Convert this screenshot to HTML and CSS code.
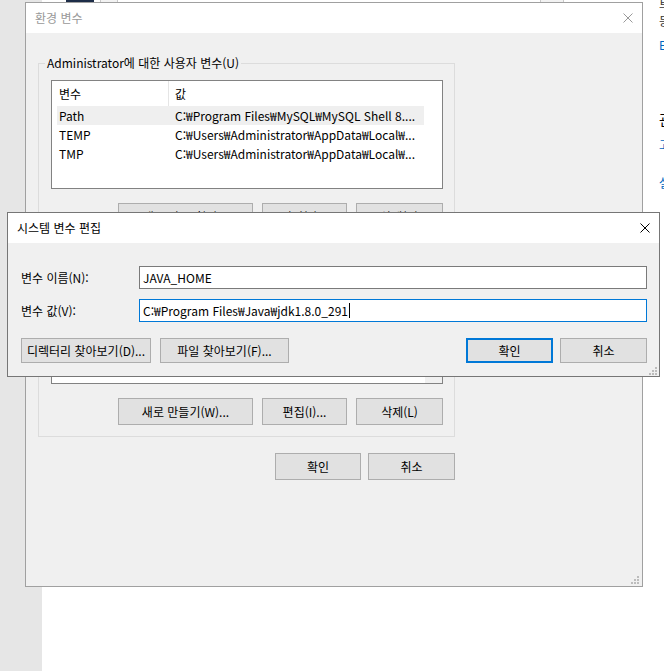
FILE: index.html
```html
<!DOCTYPE html>
<html lang="ko">
<head>
<meta charset="utf-8">
<title>환경 변수</title>
<link rel="stylesheet" href="styles.css">
</head>
<body>
<div class="desktop">
  <div class="bg-bar">
    <span class="bg-tab navy"></span>
    <span class="bg-tab grey"></span>
    <span class="bg-tab grey far"></span>
  </div>

  <div class="bg-page">
    <p class="bp-line t1">트랜잭션</p>
    <p class="bp-line t2">등록된 소유자</p>
    <p class="bp-line link t3">Edition</p>
    <p class="bp-line head t4">관련 설정</p>
    <p class="bp-line link t5">고급 시스템 설정</p>
    <p class="bp-line link t6">설정</p>
  </div>

  <section class="window env">
    <header class="titlebar inactive">
      <span class="title">환경 변수</span>
      <svg class="close" viewBox="0 0 10 10" width="10" height="10"><path d="M0.5 0.5 L9.5 9.5 M9.5 0.5 L0.5 9.5" /></svg>
    </header>
    <div class="env-body">
      <fieldset class="group">
        <legend>Administrator에 대한 사용자 변수(U)</legend>
        <div class="listview">
          <div class="lv-header">
            <span class="hcell c1">변수</span>
            <span class="hcell c2">값</span>
          </div>
          <div class="lv-row selected"><span class="cell c1">Path</span><span class="cell c2">C:₩Program Files₩MySQL₩MySQL Shell 8....</span></div>
          <div class="lv-row"><span class="cell c1">TEMP</span><span class="cell c2">C:₩Users₩Administrator₩AppData₩Local₩...</span></div>
          <div class="lv-row"><span class="cell c1">TMP</span><span class="cell c2">C:₩Users₩Administrator₩AppData₩Local₩...</span></div>
        </div>
        <div class="btn-row">
          <button class="btn w-new">새로 만들기(N)...</button>
          <button class="btn w-edit">편집(E)...</button>
          <button class="btn w-del">삭제(D)</button>
        </div>
      </fieldset>

      <fieldset class="group second">
        <legend>시스템 변수(S)</legend>
        <div class="listview scrolling">
          <div class="lv-main"></div>
          <div class="scrollbar"></div>
        </div>
        <div class="btn-row">
          <button class="btn w-new">새로 만들기(W)...</button>
          <button class="btn w-edit">편집(I)...</button>
          <button class="btn w-del">삭제(L)</button>
        </div>
      </fieldset>

      <div class="dlg-buttons">
        <button class="btn w-ok">확인</button>
        <button class="btn w-cancel">취소</button>
      </div>
    </div>
    <svg class="grip" viewBox="0 0 8 8" width="8" height="8"><rect x="6" y="0" width="2" height="2"/><rect x="3" y="3" width="2" height="2"/><rect x="6" y="3" width="2" height="2"/><rect x="0" y="6" width="2" height="2"/><rect x="3" y="6" width="2" height="2"/><rect x="6" y="6" width="2" height="2"/></svg>
  </section>

  <section class="window edit">
    <header class="titlebar">
      <span class="title">시스템 변수 편집</span>
      <svg class="close" viewBox="0 0 10 10" width="10" height="10"><path d="M0.5 0.5 L9.5 9.5 M9.5 0.5 L0.5 9.5" /></svg>
    </header>
    <div class="edit-body">
      <div class="form-grid">
        <label class="field-label" for="vname">변수 이름(N):</label>
        <div class="textbox" id="vname">JAVA_HOME</div>
        <label class="field-label" for="vvalue">변수 값(V):</label>
        <div class="textbox focused" id="vvalue">C:₩Program Files₩Java₩jdk1.8.0_291<span class="caret"></span></div>
      </div>
      <div class="edit-buttons">
        <div class="btn-group">
          <button class="btn small w-dir">디렉터리 찾아보기(D)...</button>
          <button class="btn small w-file">파일 찾아보기(F)...</button>
        </div>
        <div class="btn-group right">
          <button class="btn small default w-ok2">확인</button>
          <button class="btn small w-cancel2">취소</button>
        </div>
      </div>
    </div>
    <svg class="grip" viewBox="0 0 8 8" width="8" height="8"><rect x="6" y="0" width="2" height="2"/><rect x="3" y="3" width="2" height="2"/><rect x="6" y="3" width="2" height="2"/><rect x="0" y="6" width="2" height="2"/><rect x="3" y="6" width="2" height="2"/><rect x="6" y="6" width="2" height="2"/></svg>
  </section>
</div>
</body>
</html>
```
FILE: styles.css
```css
* { box-sizing: border-box; }

html, body {
  margin: 0;
  padding: 0;
}

body {
  width: 664px;
  height: 671px;
  overflow: hidden;
  background: #fff;
  font-family: "Noto Sans CJK KR", "Noto Sans", sans-serif;
  font-size: 12px;
  line-height: 16px;
  color: #000;
}

.desktop {
  position: relative;
  width: 664px;
  height: 671px;
  overflow: hidden;
  background: linear-gradient(to right, #e6e6e6 42px, #ffffff 42px);
}

/* background window bits at top */
.bg-bar {
  position: absolute;
  top: 0;
  left: 66px;
  width: 500px;
  height: 3px;
  display: flex;
}
.bg-tab { display: block; height: 3px; }
.bg-tab.navy { width: 28px; background: #1d2d48; }
.bg-tab.grey {
  width: 18px;
  margin-left: 6px;
  background: #f2f2f2;
  border-left: 1px solid #c8c8c8;
  border-right: 1px solid #c8c8c8;
}
.bg-tab.far { margin-left: 422px; width: 24px; }

/* settings page behind, on the right */
.bg-page {
  position: absolute;
  top: 0;
  left: 659px;
  width: 200px;
  font-size: 12px;
}
.bp-line {
  margin: 0;
  white-space: nowrap;
  color: #333;
  line-height: 16px;
}
.bp-line.t1 { margin-top: -4px; }
.bp-line.t2 { margin-top: 1px; }
.bp-line.t3 { margin-top: 8px; color: #0067c0; }
.bp-line.head { margin-top: 56px; color: #000; font-size: 14px; line-height: 20px; }
.bp-line.t5 { margin-top: 8px; }
.bp-line.t6 { margin-top: 22px; }
.bp-line.link { color: #0067c0; }

/* windows */
.window {
  position: absolute;
  display: flex;
  flex-direction: column;
  border: 1px solid #a0a0a0;
  background: #f0f0f0;
}

.env {
  left: 25px;
  top: 2px;
  width: 618px;
  height: 585px;
}

.edit {
  left: 7px;
  top: 212px;
  width: 653px;
  height: 165px;
  border-color: #767676;
}

.titlebar {
  height: 30px;
  flex: none;
  background: #fff;
  display: flex;
  align-items: center;
  justify-content: space-between;
  padding: 0 9px 0 9px;
}
.titlebar .title { color: #000; }
.titlebar.inactive .title { color: #999; }

.close {
  display: block;
  stroke: #000;
  stroke-width: 1;
  fill: none;
}
.titlebar.inactive .close { stroke: #999; }
.env .close { margin-top: -1px; }
.edit .close { margin-top: -1px; }

.grip {
  position: absolute;
  right: 3px;
  bottom: 2px;
  fill: #bcbcbc;
}
.edit .grip { right: 2px; bottom: 1px; }

/* env body */
.env-body {
  padding: 0 0 0 12px;
  width: 429px;
  display: flex;
  flex-direction: column;
}

.group {
  margin: 22px 0 0;
  padding: 9px 11px 11px 12px;
  border: 1px solid #dcdcdc;
  min-width: 0;
  width: 417px;
}
.group.second { margin-top: 8px; }

.group legend {
  margin-left: -6px;
  padding: 0 2px;
  line-height: 16px;
}

.listview {
  height: 109px;
  border: 1px solid #828282;
  background: #fff;
  overflow: hidden;
}
.listview.scrolling {
  display: flex;
}
.lv-main { flex: 1; min-width: 0; }
.scrollbar {
  width: 17px;
  flex: none;
  background: #f0f0f0;
}

.lv-header {
  height: 25px;
  width: 371px;
  display: flex;
  align-items: center;
}
.hcell { height: 25px; display: flex; align-items: center; }
.hcell.c1 {
  width: 117px;
  padding-left: 7px;
  border-right: 1px solid #e5e5e5;
}
.hcell.c2 { padding-left: 6px; }

.lv-row {
  height: 19px;
  margin-left: 5px;
  width: 367px;
  display: flex;
  align-items: center;
  white-space: nowrap;
}
.lv-row.selected { background: #efefef; }
.cell { overflow: hidden; }
.cell.c1 { width: 116px; padding-left: 2px; }
.cell.c2 { padding-left: 2px; }

.btn-row {
  margin-top: 14px;
  display: flex;
  justify-content: flex-end;
  gap: 9px;
  padding-left: 67px;
}

.btn {
  font: inherit;
  color: #000;
  background: #e1e1e1;
  border: 1px solid #adadad;
  border-radius: 0;
  padding: 0;
  height: 27px;
  display: flex;
  align-items: center;
  justify-content: center;
  white-space: nowrap;
  overflow: hidden;
}
.btn.small { height: 25px; }
.btn.default { border: 2px solid #0078d7; }

.w-new { width: 135px; }
.w-edit { width: 85px; }
.w-del { width: 87px; }
.w-ok { width: 86px; }
.w-cancel { width: 87px; }

.dlg-buttons {
  margin-top: 16px;
  display: flex;
  justify-content: flex-end;
  gap: 7px;
}

/* edit dialog */
.edit-body {
  padding: 23px 12px 13px 13px;
  display: flex;
  flex-direction: column;
}

.form-grid {
  display: grid;
  grid-template-columns: 118px 1fr;
  row-gap: 10px;
  align-items: center;
}

.field-label { white-space: nowrap; }

.textbox {
  height: 23px;
  border: 1px solid #7a7a7a;
  background: #fff;
  padding: 0 3px;
  display: flex;
  align-items: center;
  white-space: nowrap;
}
.textbox.focused { border-color: #0078d7; }

.caret {
  display: inline-block;
  width: 1px;
  height: 15px;
  background: #000;
  margin-left: 1px;
}

.edit-buttons {
  margin-top: 16px;
  display: flex;
  justify-content: space-between;
}
.btn-group { display: flex; gap: 9px; }
.btn-group.right { gap: 7px; }

.w-dir { width: 130px; }
.w-file { width: 129px; }
.w-ok2 { width: 87px; }
.w-cancel2 { width: 87px; }
```
